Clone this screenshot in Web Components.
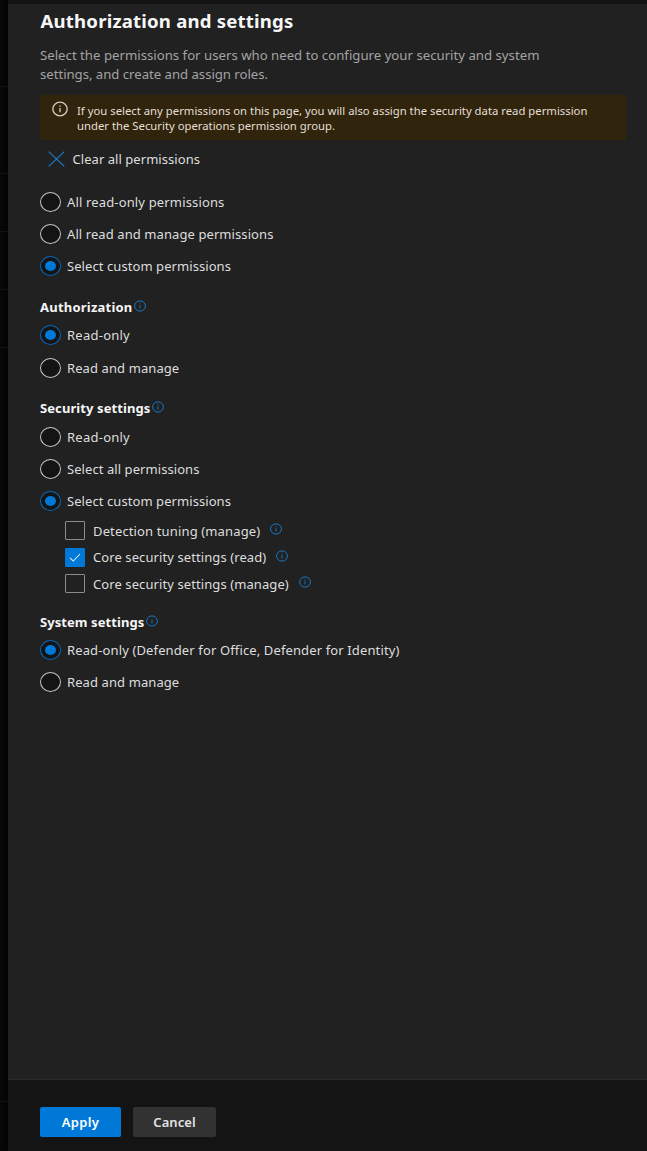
<!DOCTYPE html>
<html lang="en">
<head>
<meta charset="utf-8">
<title>Authorization and settings</title>
<style>
html, body { margin: 0; height: 100%; background: #050505; }
body { font-family: "Noto Sans", "Open Sans", sans-serif; overflow: hidden; }
</style>
</head>
<body>
<permissions-page></permissions-page>
<script>
const define = (name, html, setup) => {
  const t = document.createElement('template');
  t.innerHTML = html;
  customElements.define(name, class extends HTMLElement {
    connectedCallback() {
      if (this.shadowRoot) return;
      this.attachShadow({ mode: 'open' }).append(t.content.cloneNode(true));
      if (setup) setup(this, this.shadowRoot);
    }
  });
};

// One line of text, tracked to fill the width given in its "w" attribute.
define('fit-text', `<style>:host{display:inline-block;white-space:nowrap}</style><span><slot></slot></span>`,
  (host, root) => {
    const span = root.querySelector('span');
    const n = host.textContent.length;
    const gap = (Number(host.getAttribute('w')) - span.getBoundingClientRect().width) / n;
    span.style.letterSpacing = gap.toFixed(3) + 'px';
  });

define('info-icon', `<style>:host{display:block;width:12px;height:12px;color:#1876c4}:host([large]){width:16px;height:16px;color:#d0cbc0}svg{display:block;width:100%;height:100%}</style>
<svg viewBox="0 0 12 12" fill="none" stroke="currentColor"><ellipse cx="6" cy="6" rx="5.4" ry="5.1" stroke-width="1"/><path d="M6 5.2V8.5M6 3.4V4.3" stroke-width="1"/></svg>`);

define('radio-option', `<style>
:host{display:flex;align-items:center;height:20px;margin-bottom:12.2px;font-size:13px;line-height:20px;color:#dedede}
i{box-sizing:border-box;width:21px;height:20px;margin-right:6px;border:1.5px solid #c6c6c6;border-radius:50%;background:#141414;display:flex;align-items:center;justify-content:center}
:host([checked]) i{border-color:#0b68b8}
:host([checked]) i::after{content:"";width:11px;height:10px;border-radius:50%;background:#0078d7}
</style><i></i><slot></slot>`);

define('check-option', `<style>
:host{display:flex;align-items:center;height:20px;margin:0 0 6.5px 24.5px;font-size:13px;line-height:20px;color:#dedede}
i{box-sizing:border-box;width:20px;height:19px;margin-right:8.5px;border:1px solid #8b8b8b;border-radius:1px}
svg{display:none;width:18px;height:17px}
:host([checked]) i{background:#0078d7;border-color:#0078d7}
:host([checked]) svg{display:block}
info-icon{margin:-3px 0 0 10px}
</style><i><svg viewBox="0 0 19 17" fill="none" stroke="#e4f1fb" stroke-width="1.1"><path d="M4.2 9 7.6 12.2 14.8 4.8"/></svg></i><slot></slot><info-icon></info-icon>`);

define('section-title', `<style>
:host{display:flex;align-items:center;height:20px;font-size:13px;font-weight:700;line-height:20px;color:#f6f6f6}
info-icon{margin:-2px 0 0 1.5px}
</style><slot></slot><info-icon></info-icon>`);

define('option-section', `<style>:host{display:flow-root;padding-top:8.6px}:host(.sys){padding-top:11.5px}.b{padding-top:8.5px}</style><slot name="title"></slot><div class="b"><slot></slot></div>`);

define('notice-bar', `<style>
:host{display:flex;box-sizing:border-box;width:586px;height:45px;background:#30240d;padding:8px 0 0 12px;font-size:11.3px;line-height:15px;color:#e4dfd5}
info-icon{margin:-1.6px 9px 0 0}
div{display:flex;flex-direction:column}
</style><info-icon large></info-icon><div><slot></slot></div>`);

define('clear-action', `<style>
:host{display:flex;align-items:center;height:20px;padding-left:8px;font-size:13px;line-height:20px;color:#dedede}
svg{width:17px;height:16px;margin-right:7.5px}
</style><svg viewBox="0 0 17 16" fill="none" stroke="#1a78c8" stroke-width="1.25"><path d="M.7.6 16.3 15.4M16.3.6.7 15.4"/></svg><slot></slot>`);

define('action-button', `<style>
:host{display:flex;box-sizing:border-box;width:83px;height:30px;align-items:center;justify-content:center;border-radius:2px;background:#323232;color:#e2e2e2;font-size:13px;font-weight:600;line-height:20px}
:host([primary]){width:81px;background:#0078d7;color:#fff}
</style><slot></slot>`);

define('page-backdrop', `<style>
:host{display:grid;grid-template-rows:87px 87px 58px 58px 58px 754px 1fr;background:linear-gradient(90deg,#080808,#030303)}
div{border-bottom:1px solid #121212}div:last-child{border:0}
</style><div></div><div></div><div></div><div></div><div></div><div></div><div></div>`);

define('permissions-page', `<style>
:host{display:grid;grid-template-columns:8px 1fr;height:1151px}
.panel{display:flex;flex-direction:column;background:#212121;border-top:4px solid #141414}
main{flex:1;padding:4px 0 0 32px}
h1{margin:0;padding-left:.5px;font-size:18.6px;line-height:26px;font-weight:700;color:#f7f7f7;height:26px}
.desc{margin:11.5px 0 11px;display:flex;flex-direction:column;font-size:13.2px;line-height:19px;color:#a3a3a3;height:38px}
clear-action{margin:9px 0 23.2px}
.checks{margin-top:-2.7px}
footer{box-sizing:border-box;height:72px;background:#141414;border-top:1px solid #2b2b2b;padding:27px 0 0 32px;display:flex;gap:12px}
</style>
<page-backdrop></page-backdrop>
<div class="panel">
<main>
<h1><fit-text w="253">Authorization and settings</fit-text></h1>
<div class="desc"><fit-text w="499.5">Select the permissions for users who need to configure your security and system</fit-text><fit-text w="228">settings, and create and assign roles.</fit-text></div>
<notice-bar><fit-text w="510.5">If you select any permissions on this page, you will also assign the security data read permission</fit-text><fit-text w="258">under the Security operations permission group.</fit-text></notice-bar>
<clear-action><fit-text w="127.5">Clear all permissions</fit-text></clear-action>
<radio-option><fit-text w="157.5">All read-only permissions</fit-text></radio-option>
<radio-option><fit-text w="206.5">All read and manage permissions</fit-text></radio-option>
<radio-option checked><fit-text w="164">Select custom permissions</fit-text></radio-option>
<option-section><section-title slot="title"><fit-text w="92.5">Authorization</fit-text></section-title>
<radio-option checked><fit-text w="63">Read-only</fit-text></radio-option>
<radio-option><fit-text w="112.3">Read and manage</fit-text></radio-option>
</option-section>
<option-section><section-title slot="title"><fit-text w="110.5">Security settings</fit-text></section-title>
<radio-option><fit-text w="63">Read-only</fit-text></radio-option>
<radio-option><fit-text w="132.5">Select all permissions</fit-text></radio-option>
<radio-option checked><fit-text w="164">Select custom permissions</fit-text></radio-option>
<div class="checks">
<check-option><fit-text w="167.3">Detection tuning (manage)</fit-text></check-option>
<check-option checked><fit-text w="173.3">Core security settings (read)</fit-text></check-option>
<check-option><fit-text w="195.8">Core security settings (manage)</fit-text></check-option>
</div>
</option-section>
<option-section class="sys"><section-title slot="title"><fit-text w="104.3">System settings</fit-text></section-title>
<radio-option checked><fit-text w="332.5">Read-only (Defender for Office, Defender for Identity)</fit-text></radio-option>
<radio-option><fit-text w="112.3">Read and manage</fit-text></radio-option>
</option-section>
</main>
<footer><action-button primary><fit-text w="37.5">Apply</fit-text></action-button><action-button><fit-text w="42.5">Cancel</fit-text></action-button></footer>
</div>`);
</script>
</body>
</html>
